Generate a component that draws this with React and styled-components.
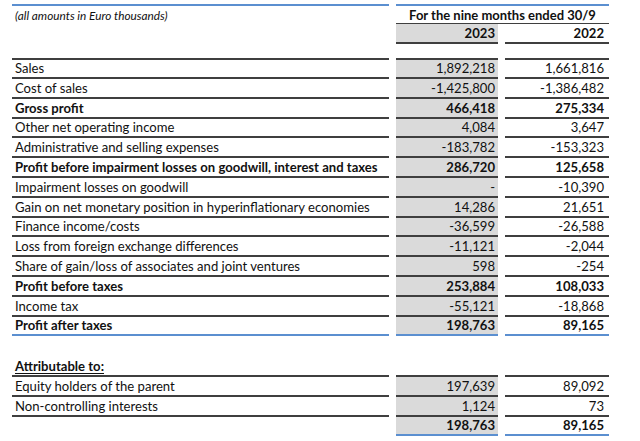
import React from "react";
import styled, { createGlobalStyle } from "styled-components";

const Global = createGlobalStyle`
  html, body { margin: 0; padding: 0; background: #fff; }
  body { font-family: "Lato", "Liberation Sans", sans-serif; color: #111; }
`;

const DARK = "#3f3f3f";
const BLUE = "#5b8fd0";
const SHADE = "#dadada";

const Sheet = styled.div`
  padding: 4px 0 0 12px;
  width: 600px;
`;

const Row = styled.div`
  display: grid;
  grid-template-columns: 377px 102px 104px;
  column-gap: 7px;
  height: ${(p) => p.$h || 19.7}px;
  margin-top: ${(p) => p.$gap || 0}px;
`;

const lineOf = (l) =>
  l === "blue" ? `2px solid ${BLUE}` : l === "none" ? "2px solid transparent" : `2px solid ${DARK}`;

const Label = styled.div`
  box-sizing: border-box;
  display: flex;
  align-items: flex-end;
  padding: 0 0 0 3px;
  font-size: 13.1px;
  line-height: 17px;
  font-weight: ${(p) => (p.$bold ? 700 : 400)};
  text-decoration: ${(p) => (p.$under ? "underline" : "none")};
  text-underline-offset: 2px;
  border-bottom: ${(p) => lineOf(p.$line)};
  border-top: ${(p) => (p.$top ? `2px solid ${DARK}` : "none")};
  white-space: nowrap;
`;

const Num = styled(Label)`
  justify-content: flex-end;
  padding: 0 ${(p) => (p.$shade ? 3 : 5)}px 0 0;
  background: ${(p) => (p.$shade ? SHADE : "transparent")};
`;

const Note = styled.div`
  box-sizing: border-box;
  border-top: 2px solid ${BLUE};
  padding: 3px 0 0 3px;
  font-size: 11.8px;
  font-style: italic;
  line-height: 14px;
`;

const Period = styled.div`
  grid-column: 2 / 4;
  box-sizing: border-box;
  border-top: 2px solid ${BLUE};
  border-bottom: 1px solid ${DARK};
  text-align: center;
  font-size: 13px;
  font-weight: 700;
  line-height: 16px;
  padding-top: 1px;
`;

const rows = [
  ["Sales", "1,892,218", "1,661,816"],
  ["Cost of sales", "-1,425,800", "-1,386,482"],
  ["Gross profit", "466,418", "275,334", true],
  ["Other net operating income", "4,084", "3,647"],
  ["Administrative and selling expenses", "-183,782", "-153,323"],
  ["Profit before impairment losses on goodwill, interest and taxes", "286,720", "125,658", true],
  ["Impairment losses on goodwill", "-", "-10,390"],
  ["Gain on net monetary position in hyperinflationary economies", "14,286", "21,651"],
  ["Finance income/costs", "-36,599", "-26,588"],
  ["Loss from foreign exchange differences", "-11,121", "-2,044"],
  ["Share of gain/loss of associates and joint ventures", "598", "-254"],
  ["Profit before taxes", "253,884", "108,033", true],
  ["Income tax", "-55,121", "-18,868"],
  ["Profit after taxes", "198,763", "89,165", true],
];

const attributable = [
  ["Equity holders of the parent", "197,639", "89,092"],
  ["Non-controlling interests", "1,124", "73"],
];

export default function App() {
  return (
    <>
      <Global />
      <Sheet>
        <Row $h={20}>
          <Note>(all amounts in Euro thousands)</Note>
          <Period>For the nine months ended 30/9</Period>
        </Row>
        <Row $h={20}>
          <div />
          <Num $shade $bold>2023</Num>
          <Num $bold>2022</Num>
        </Row>
        {rows.map(([label, a, b, bold], i) => {
          const last = i === rows.length - 1;
          const line = last ? "blue" : "dark";
          return (
            <Row key={label} $gap={i === 0 ? 14 : 0} $h={i === 0 ? 21 : 19.8}>
              <Label $bold={bold} $line={line} $top={i === 0}>{label}</Label>
              <Num $shade $bold={bold} $line={line} $top={i === 0}>{a}</Num>
              <Num $bold={bold} $line={line} $top={i === 0}>{b}</Num>
            </Row>
          );
        })}
        <Row $gap={21} $h={20}>
          <Label $bold $under>Attributable to:</Label>
          <Num $line="dark" />
          <Num $line="dark" />
        </Row>
        {attributable.map(([label, a, b]) => (
          <Row key={label}>
            <Label>{label}</Label>
            <Num $shade>{a}</Num>
            <Num>{b}</Num>
          </Row>
        ))}
        <Row>
          <Label $line="none" />
          <Num $shade $bold $line="blue">198,763</Num>
          <Num $bold $line="blue">89,165</Num>
        </Row>
      </Sheet>
    </>
  );
}
